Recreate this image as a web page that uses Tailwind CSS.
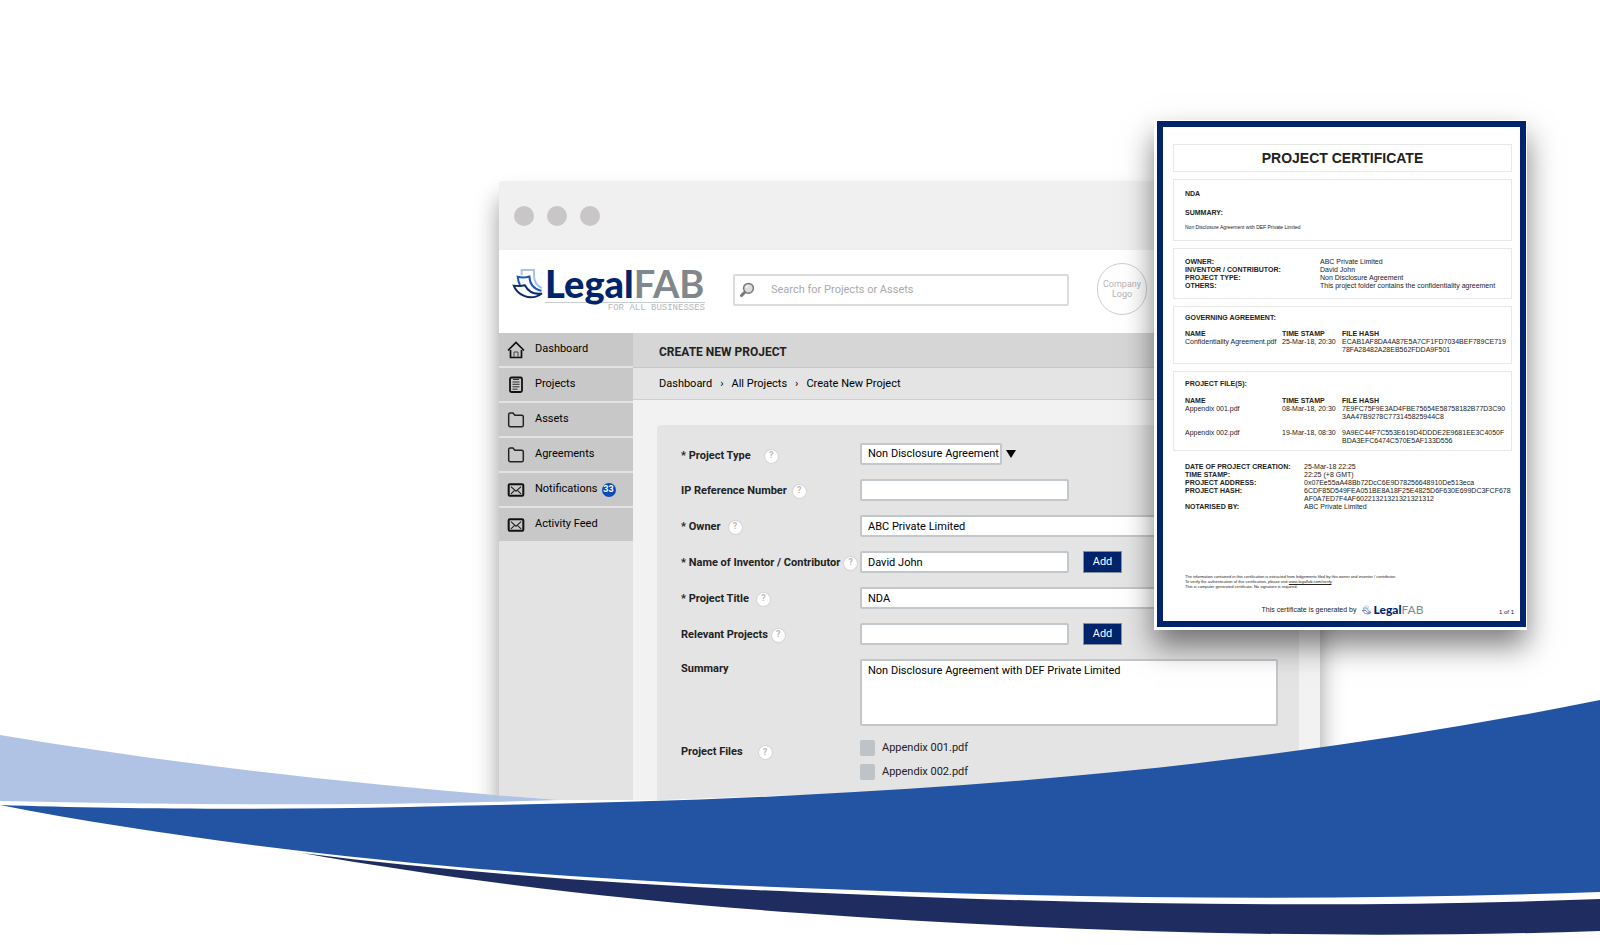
<!DOCTYPE html>
<html lang="en">
<head>
<meta charset="utf-8">
<meta name="viewport" content="width=device-width, initial-scale=1">
<title>LegalFAB</title>
<script src="https://cdn.jsdelivr.net/npm/@tailwindcss/browser@4"></script>
</head>
<body class="bg-white font-[family-name:Roboto,'Liberation_Sans',Arial,sans-serif] text-black">

<svg class="hidden" aria-hidden="true">
  <symbol id="mark" viewBox="34 26 94 98">
    <g fill="none" stroke-linejoin="miter">
      <path d="M63 48V32h38v18c0 18 8 30 24 38" stroke="#a9c0ec" stroke-width="6"/>
      <path d="M58 78c-4-8-6-16-7-25 13 3 24 3 36-1 0 24 12 38 37 44" stroke="#1c55c0" stroke-width="6"/>
      <path d="M39 80c8 24 48 52 86 24-24 4-42-6-52-25-11 3-22 3-34 1Z" stroke="#0b2a6b" stroke-width="6"/>
    </g>
  </symbol>
  <symbol id="folder" viewBox="0 0 16 16"><path d="M1.500 12.500V3.200Q1.500 1.800 2.900 1.800H5.300L7 3.800H13Q14.500 3.800 14.500 5.200V12.600Q14.500 14 13 14H3Q1.500 14 1.500 12.500Z" fill="none" stroke="#222" stroke-width="1.300"/></symbol>
  <symbol id="mail" viewBox="0 0 16 16"><rect x="1.500" y="2.800" width="13" height="10.400" rx="1" fill="none" stroke="#111" stroke-width="1.800"/><path d="M3.500 5 8 9l4.500-4M3.500 11.500l3-3M12.500 11.500l-3-3" fill="none" stroke="#222" stroke-width="1"/></symbol>
</svg>

<main class="relative min-h-screen overflow-hidden pt-[181px] pr-[280px] pl-[499px]">

  <section class="rounded-t bg-[#f2f2f2] shadow-[0_18px_24px_rgba(0,0,0,0.4)]">
    <div class="flex h-[69px] items-center gap-[13px] rounded-t bg-[#f0f0f0] px-[15px]">
      <span class="size-5 rounded-full bg-[#c8c6c6]"></span>
      <span class="size-5 rounded-full bg-[#c8c6c6]"></span>
      <span class="size-5 rounded-full bg-[#c8c6c6]"></span>
    </div>

    <header class="flex h-[83px] items-start bg-white pt-[13px] pl-[13px]">
      <a href="#" class="flex items-start pt-[5px]">
        <svg class="h-8 w-[31px]"><use href="#mark"/></svg>
        <span class="relative ml-0.5 block w-[160px] font-[family-name:Lato,sans-serif] text-[38px] leading-[30px] whitespace-nowrap">
          <span class="absolute inset-x-0 top-[34px] h-px bg-[#c9cdd0]"></span>
          <span class="relative font-black text-[#00246b]">Legal</span><span class="relative font-bold text-[#7f888c]">FAB</span>
          <span class="block text-right font-[family-name:'Liberation_Mono',monospace] text-[9px] leading-[20px] text-[#b4b8bb]">FOR ALL BUSINESSES</span>
        </span>
      </a>
      <label class="mt-[11px] ml-7 flex h-8 w-[336px] items-center rounded-xs border-2 border-[#dcdcdc] bg-white pl-1">
        <svg class="size-4" viewBox="0 0 16 16" fill="none"><path d="M2.500 13.500 6 10" stroke="#777" stroke-width="3" stroke-linecap="round"/><circle cx="9.500" cy="6.300" r="4.900" fill="#ddd" stroke="#777" stroke-width="1.500"/><path d="M7 6a2.600 2.600 0 0 1 2.500-2.400" stroke="#fff"/></svg>
        <input type="text" aria-label="Search" placeholder="Search for Projects or Assets" class="ml-4 min-w-0 flex-1 text-[11px] outline-none placeholder:text-[#aaa]">
      </label>
      <div class="ml-7 flex h-[52px] w-[50px] items-center justify-center rounded-full border border-[#cfcfcf] text-center text-[9px] leading-[10px] text-[#b5b5b5]">Company<br>Logo</div>
    </header>

    <div class="flex">
      <nav class="flex w-[134px] shrink-0 flex-col gap-0.5 bg-[#e3e3e3] text-[11px] *:flex *:h-[33px] *:items-center *:bg-[#c8c8c8] *:pl-2">
        <a href="#"><svg class="mr-2.5 size-[18px]" viewBox="0 0 18 18" fill="none"><path d="M1 9.500 9 1.500l8 8M3.500 9v7.500h11V9" stroke="#111" stroke-width="1.700"/><path d="M7 16v-5h4v5" stroke="#444"/></svg>Dashboard</a>
        <a href="#"><svg class="mr-2.5 size-[18px]" viewBox="0 0 18 18" fill="none"><rect x="3" y="1.500" width="12" height="14.500" rx="1.500" stroke="#111" stroke-width="1.800"/><path d="M6 3.500h6M5.500 6h7M5.500 8.300h7M5.500 10.800h7M5.500 13.200h5" stroke="#333"/></svg>Projects</a>
        <a href="#"><svg class="mr-2.5 size-[18px]"><use href="#folder"/></svg>Assets</a>
        <a href="#"><svg class="mr-2.5 size-[18px]"><use href="#folder"/></svg>Agreements</a>
        <a href="#"><svg class="mr-2.5 size-[18px]"><use href="#mail"/></svg>Notifications<span class="ml-1 flex size-3.5 items-center justify-center rounded-full bg-[#0a4bb8] text-[9px] font-bold text-white">33</span></a>
        <a href="#"><svg class="mr-2.5 size-[18px]"><use href="#mail"/></svg>Activity Feed</a>
      </nav>

      <div class="min-w-0 flex-1">
        <h1 class="h-[35px] border-b border-[#c8c8c8] bg-[#d6d6d6] pl-[26px] text-xs leading-[38px] font-bold text-[#222]">CREATE NEW PROJECT</h1>
        <div class="flex h-8 items-center gap-2 border-b border-[#cfcfcf] bg-[#e4e4e4] pt-px pl-[26px] text-[11px]">
          <a href="#">Dashboard</a><span>›</span><a href="#">All Projects</a><span>›</span><span>Create New Project</span>
        </div>

        <form class="mt-[25px] mr-[21px] ml-6 flex flex-col gap-[14px] rounded-t bg-[#e4e4e4] pt-[18px] pr-[21px] pb-8 pl-6 text-[11px]">
          <div class="flex h-[22px] items-center">
            <div class="flex w-[179px] shrink-0 items-center gap-3.5 pt-1 font-bold text-[#222]"><label for="type">* Project Type</label><span class="flex size-[13px] items-center justify-center rounded-full bg-white text-[9px] text-[#bbb] ring-1 ring-[#d5d5d5]">?</span></div>
            <select id="type" class="h-[22px] w-[142px] appearance-none rounded-xs border-2 border-[#c2c7cb] bg-white pl-1.5 outline-none"><option>Non Disclosure Agreement</option></select>
            <svg class="ml-1 h-2 w-2.5" viewBox="0 0 10 8"><path d="M0 0h10L5 8z"/></svg>
          </div>
          <div class="flex h-[22px] items-center">
            <div class="flex w-[179px] shrink-0 items-center gap-1.5 pt-0.5 font-bold text-[#222]"><label for="ip">IP Reference Number</label><span class="flex size-[13px] items-center justify-center rounded-full bg-white text-[9px] text-[#bbb] ring-1 ring-[#d5d5d5]">?</span></div>
            <input id="ip" type="text" class="h-[22px] w-[209px] rounded-xs border-2 border-[#c2c7cb] bg-white px-1.5">
          </div>
          <div class="flex h-[22px] items-center">
            <div class="flex w-[179px] shrink-0 items-center gap-2 pt-0.5 font-bold text-[#222]"><label for="owner">* Owner</label><span class="flex size-[13px] items-center justify-center rounded-full bg-white text-[9px] text-[#bbb] ring-1 ring-[#d5d5d5]">?</span></div>
            <input id="owner" type="text" value="ABC Private Limited" class="h-[22px] min-w-0 flex-1 rounded-xs border-2 border-[#c2c7cb] bg-white px-1.5">
          </div>
          <div class="flex h-[22px] items-center">
            <div class="flex w-[179px] shrink-0 items-center gap-1 pt-0.5 font-bold whitespace-nowrap text-[#222]"><label for="inv">* Name of Inventor / Contributor</label><span class="flex size-[13px] items-center justify-center rounded-full bg-white text-[9px] text-[#bbb] ring-1 ring-[#d5d5d5]">?</span></div>
            <input id="inv" type="text" value="David John" class="h-[22px] w-[209px] rounded-xs border-2 border-[#c2c7cb] bg-white px-1.5">
            <button type="button" class="ml-3.5 h-[22px] w-[39px] border border-[#8a8f9c] bg-[#00246b] text-white">Add</button>
          </div>
          <div class="flex h-[22px] items-center">
            <div class="flex w-[179px] shrink-0 items-center gap-2 pt-0.5 font-bold text-[#222]"><label for="title">* Project Title</label><span class="flex size-[13px] items-center justify-center rounded-full bg-white text-[9px] text-[#bbb] ring-1 ring-[#d5d5d5]">?</span></div>
            <input id="title" type="text" value="NDA" class="h-[22px] min-w-0 flex-1 rounded-xs border-2 border-[#c2c7cb] bg-white px-1.5">
          </div>
          <div class="flex h-[22px] items-center">
            <div class="flex w-[179px] shrink-0 items-center gap-1 pt-0.5 font-bold text-[#222]"><label for="rel">Relevant Projects</label><span class="flex size-[13px] items-center justify-center rounded-full bg-white text-[9px] text-[#bbb] ring-1 ring-[#d5d5d5]">?</span></div>
            <input id="rel" type="text" class="h-[22px] w-[209px] rounded-xs border-2 border-[#c2c7cb] bg-white px-1.5">
            <button type="button" class="ml-3.5 h-[22px] w-[39px] border border-[#8a8f9c] bg-[#00246b] text-white">Add</button>
          </div>
          <div class="flex items-start">
            <label for="sum" class="w-[179px] shrink-0 pt-0.5 font-bold text-[#222]">Summary</label>
            <textarea id="sum" class="h-[67px] min-w-0 flex-1 resize-none rounded-xs border-2 border-[#c2c7cb] bg-white px-1.5 pt-0.5">Non Disclosure Agreement with DEF Private Limited</textarea>
          </div>
          <div class="flex items-start">
            <div class="flex w-[179px] shrink-0 items-center gap-4 pt-1 font-bold text-[#222]"><span>Project Files</span><span class="flex size-[13px] items-center justify-center rounded-full bg-white text-[9px] text-[#bbb] ring-1 ring-[#d5d5d5]">?</span></div>
            <div class="flex flex-col gap-2 leading-4 text-[#222]">
              <label class="flex items-center gap-[7px]"><input type="checkbox" class="h-4 w-[15px] appearance-none rounded-xs bg-[#bdc3c7]">Appendix 001.pdf</label>
              <label class="flex items-center gap-[7px]"><input type="checkbox" class="h-4 w-[15px] appearance-none rounded-xs bg-[#bdc3c7]">Appendix 002.pdf</label>
            </div>
          </div>
        </form>
      </div>
    </div>
  </section>

  <svg class="absolute inset-x-0 bottom-0 h-[255px] w-full" viewBox="0 690 1600 255" preserveAspectRatio="none" aria-hidden="true">
    <path fill="#fff" d="M0 735C180 765 370 786 560 800L660 800 800 795V888L1600 892V945H0Z"/>
    <path fill="#b1c3e5" d="M0 735C180 765 370 786 560 800Q300 808 0 801Z"/>
    <path fill="#2353a3" d="M0 805C110 809 270 810 408 807C540 804 670 802 800 795C1067 782 1334 754 1600 700V892C1340 901 1080 899 800 888C500 877 220 848 0 805Z"/>
    <path fill="#1f2c5f" d="M302 853C460 873 630 885 800 892C1060 904 1340 909 1600 899V931C1340 940 1060 932 800 913C630 901 460 881 302 853Z"/>
  </svg>

  <article class="absolute top-[120px] right-[73px] w-[373px] bg-white pt-px pr-px pb-[3px] pl-[3px] font-[family-name:'Liberation_Sans',Arial,sans-serif] text-[7px] leading-[8px] text-[#222] shadow-[0_16px_28px_rgba(0,0,0,0.5)]">
    <div class="flex flex-col border-[6px] border-[#00246b] pt-[17px] pr-1.5 pb-[3px] pl-2">
      <div class="flex flex-col gap-[7px] px-0.5">
        <h2 class="border border-[#e8e8e8] text-center text-sm leading-[26px] font-bold">PROJECT CERTIFICATE</h2>
        <div class="h-[62px] border border-[#e8e8e8] pt-2.5 pl-[11px]">
          <h3 class="font-bold">NDA</h3>
          <h3 class="mt-[11px] font-bold">SUMMARY:</h3>
          <p class="mt-1.5 text-[5px]">Non Disclosure Agreement with DEF Private Limited</p>
        </div>
        <dl class="grid h-[51px] grid-cols-[135px_1fr] content-start border border-[#e8e8e8] pt-[9px] pl-[11px] whitespace-nowrap">
          <dt class="font-bold">OWNER:</dt><dd>ABC Private Limited</dd>
          <dt class="font-bold">INVENTOR / CONTRIBUTOR:</dt><dd>David John</dd>
          <dt class="font-bold">PROJECT TYPE:</dt><dd>Non Disclosure Agreement</dd>
          <dt class="font-bold">OTHERS:</dt><dd>This project folder contains the confidentiality agreement</dd>
        </dl>
        <div class="h-[58px] border border-[#e8e8e8] pt-[7px] pl-[11px]">
          <h3 class="font-bold">GOVERNING AGREEMENT:</h3>
          <table class="mt-2 w-full table-fixed text-left whitespace-nowrap">
            <thead><tr><th class="w-[97px]">NAME</th><th class="w-[60px]">TIME STAMP</th><th>FILE HASH</th></tr></thead>
            <tbody><tr class="align-top"><td>Confidentiality Agreement.pdf</td><td>25-Mar-18, 20:30</td><td>ECAB1AF8DA4A87E5A7CF1FD7034BEF789CE719<br>78FA28482A28EB562FDDA9F501</td></tr></tbody>
          </table>
        </div>
        <div class="h-[80px] border border-[#e8e8e8] pt-2 pl-[11px]">
          <h3 class="font-bold">PROJECT FILE(S):</h3>
          <table class="mt-[9px] w-full table-fixed text-left whitespace-nowrap">
            <thead><tr><th class="w-[97px]">NAME</th><th class="w-[60px]">TIME STAMP</th><th>FILE HASH</th></tr></thead>
            <tbody>
              <tr class="align-top"><td>Appendix 001.pdf</td><td>08-Mar-18, 20:30</td><td class="pb-2">7E9FC75F9E3AD4FBE75654E58758182B77D3C90<br>3AA47B9278C773145825944C8</td></tr>
              <tr class="align-top"><td>Appendix 002.pdf</td><td>19-Mar-18, 08:30</td><td>9A9EC44F7C553E619D4DDDE2E9681EE3C4050F<br>BDA3EFC6474C570E5AF133D556</td></tr>
            </tbody>
          </table>
        </div>
      </div>
      <dl class="mt-3 grid grid-cols-[119px_1fr] pl-[14px] whitespace-nowrap">
        <dt class="font-bold">DATE OF PROJECT CREATION:</dt><dd>25-Mar-18 22:25</dd>
        <dt class="font-bold">TIME STAMP:</dt><dd>22:25 (+8 GMT)</dd>
        <dt class="font-bold">PROJECT ADDRESS:</dt><dd>0x07Ee55aA48Bb72DcC6E9D78256648910De513eca</dd>
        <dt class="font-bold">PROJECT HASH:</dt><dd>6CDF85D549FEA051BE8A18F25E4825D6F630E699DC3FCF678<br>AF0A7ED7F4AF60221321321321321312</dd>
        <dt class="font-bold">NOTARISED BY:</dt><dd>ABC Private Limited</dd>
      </dl>
      <div class="mt-[63px] pl-[14px] text-[4px] leading-[5px]">
        <p>The information contained in this certification is extracted from ledgements filed by this owner and inventor / contributor.</p>
        <p>To verify the authentication of this certification, please visit <a href="#" class="underline">www.legalfab.com/verify</a>.</p>
        <p>This is computer generated certificate. No signature is required.</p>
      </div>
      <div class="mt-[13px] grid grid-cols-[1fr_auto_1fr] items-center">
        <span></span>
        <div class="flex items-center gap-1.5">This certificate is generated by
          <span class="flex items-center gap-0.5 font-[family-name:Lato,sans-serif] text-xs leading-4"><svg class="h-[10px] w-[9px]"><use href="#mark"/></svg><span><b class="font-black text-[#00246b]">Legal</b><span class="text-[#7f888c]">FAB</span></span></span>
        </div>
        <span class="pt-1 text-right text-[6px]">1 of 1</span>
      </div>
    </div>
  </article>
</main>
</body>
</html>
